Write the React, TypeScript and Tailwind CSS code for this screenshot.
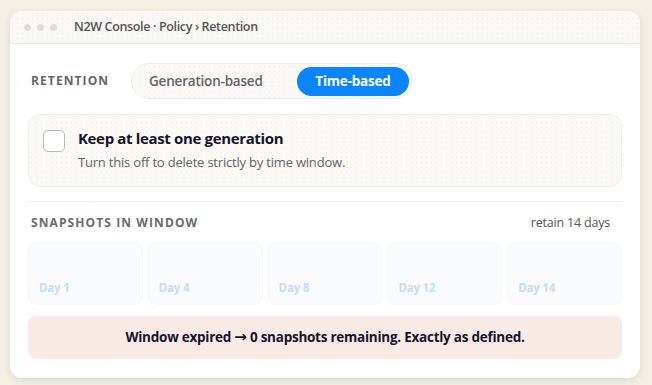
import React from 'react';

const dotted =
  'bg-[radial-gradient(#efede6_0.7px,transparent_0.7px)] bg-[length:5px_5px]';

const days = ['Day 1', 'Day 4', 'Day 8', 'Day 12', 'Day 14'];

export default function App() {
  return (
    <div
      className="w-[652px] h-[385px] bg-[#f3efe4] pt-[11px] pl-[10px] overflow-hidden"
      style={{ fontFamily: '"Open Sans", "Noto Sans", sans-serif' }}
    >
      <div className="w-[630px] h-[367px] bg-white rounded-xl shadow-[0_2px_6px_rgba(120,110,80,0.18)] overflow-hidden">
        {/* title bar */}
        <div className={`h-[33px] flex items-center border-b border-[#ebe9e3] bg-[#f9f8f5] ${dotted}`}>
          <div className="flex gap-[6px] pl-[14px]">
            <span className="w-[7px] h-[7px] rounded-full bg-[#dcdcdc]" />
            <span className="w-[7px] h-[7px] rounded-full bg-[#dcdcdc]" />
            <span className="w-[7px] h-[7px] rounded-full bg-[#dcdcdc]" />
          </div>
          <span className="ml-[17px] text-[12.5px] font-semibold text-[#555] tracking-[-0.35px]">
            N2W Console · Policy › Retention
          </span>
        </div>

        <div className="px-[18px] pt-[19px]">
          {/* retention toggle */}
          <div className="flex items-center">
            <span className="w-[100px] pl-[3px] text-[12px] font-bold tracking-[1.1px] text-[#666]">
              RETENTION
            </span>
            <div className={`ml-[3px] h-[36px] w-[282px] rounded-full border border-[#ececec] bg-[#faf9f7] ${dotted} flex items-center px-[3px]`}>
              <span className="flex-1 pl-[14px] text-[13.5px] font-semibold text-[#666] tracking-[-0.2px]">
                Generation-based
              </span>
              <span className="h-[29px] w-[112px] rounded-full bg-[#0a84ff] text-white text-[13.5px] font-bold flex items-center justify-center tracking-[-0.2px]">
                Time-based
              </span>
            </div>
          </div>

          {/* keep one generation */}
          <div className={`mt-[15px] h-[73px] rounded-xl border border-[#efede8] bg-[#faf9f6] ${dotted} flex items-start pl-[14px] pt-[15px]`}>
            <span className="w-[22px] h-[22px] rounded-[5px] border border-[#b9b9b9] bg-white" />
            <div className="ml-[13px] -mt-[3px]">
              <div className="text-[15px] font-bold text-[#14142b] tracking-[-0.35px]">
                Keep at least one generation
              </div>
              <div className="mt-[3px] text-[13px] text-[#666] tracking-[-0.2px]">
                Turn this off to delete strictly by time window.
              </div>
            </div>
          </div>

          <div className="mt-[14px] border-t border-[#eeeeee]" />

          {/* snapshots */}
          <div className="mt-[12px] flex items-center justify-between">
            <span className="pl-[3px] text-[12px] font-bold tracking-[1.1px] text-[#6b6b6b]">
              SNAPSHOTS IN WINDOW
            </span>
            <span className="pr-[12px] text-[12.5px] text-[#555] tracking-[-0.2px]">retain 14 days</span>
          </div>

          <div className="mt-[9px] grid grid-cols-5 gap-[5px]">
            {days.map((d) => (
              <div
                key={d}
                className="h-[63px] rounded-lg border border-[#f4f7fc] bg-[#f9fbff] flex items-end pl-[10px] pb-[8px]"
              >
                <span className="text-[11.5px] font-bold text-[#c6dcf4] tracking-[-0.2px]">{d}</span>
              </div>
            ))}
          </div>

          <div className="mt-[11px] h-[43px] rounded-lg bg-[#f8ebe6] flex items-center justify-center">
            <span className="text-[13.5px] font-bold text-[#14142b] tracking-[-0.25px]">
              Window expired{' '}
              <span
                className="text-[15px] font-bold leading-none"
                style={{ fontFamily: '"DejaVu Sans", sans-serif' }}
              >
                →
              </span>{' '}
              0 snapshots remaining. Exactly as defined.
            </span>
          </div>
        </div>
      </div>
    </div>
  );
}
